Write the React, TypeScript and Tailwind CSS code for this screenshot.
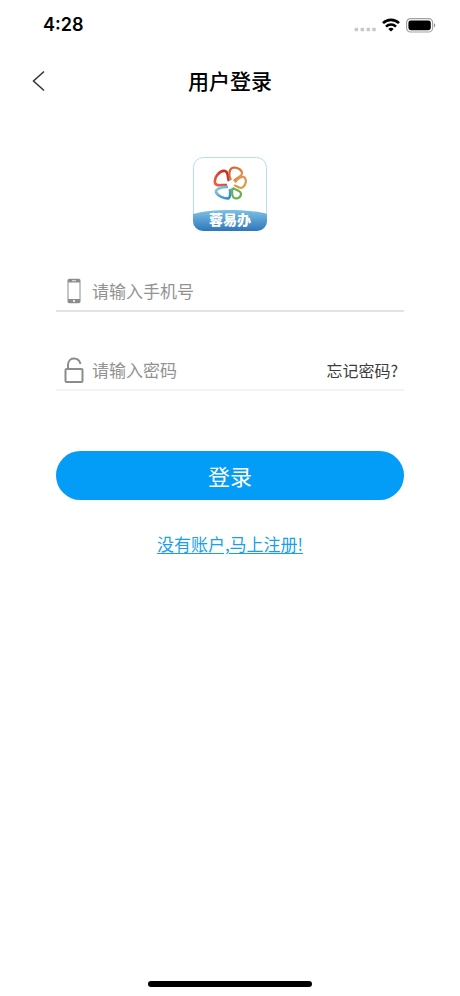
function StatusBar() {
  return (
    <div className="flex h-12 items-center justify-between pl-[43px] pr-6 pt-0.5 text-black">
      <span className="font-[Inter] text-[18px] font-semibold leading-6">4:28</span>
      <div className="flex items-center gap-1.5">
        <svg width="22" height="5" viewBox="0 0 22 5" fill="#c8c8c8" className="mt-2" aria-hidden="true">
          <rect x="0.5" y="0.7" width="3.6" height="3.6" rx="1" />
          <rect x="6.5" y="0.7" width="3.6" height="3.6" rx="1" />
          <rect x="12.5" y="0.7" width="3.6" height="3.6" rx="1" />
          <rect x="18.2" y="0.7" width="3.6" height="3.6" rx="1" />
        </svg>
        <svg width="18" height="14" viewBox="0 0 18 14" fill="none" stroke="#000" strokeWidth="2.6" aria-hidden="true">
          <path d="M1 5.2C5.5 0.7 12.5 0.7 17 5.2" />
          <path d="M4 8.6C6.8 5.8 11.2 5.8 14 8.6" />
          <path d="M9 13.6 6.3 10.9C7.9 9.5 10.1 9.5 11.7 10.9Z" fill="#000" stroke="none" />
        </svg>
        <svg width="30" height="15" viewBox="0 0 30 15" aria-hidden="true">
          <rect x="0.6" y="0.6" width="26" height="13.4" rx="4" fill="none" stroke="#a3a3a3" strokeWidth="1.2" />
          <rect x="2.4" y="2.4" width="22.4" height="9.8" rx="2.4" fill="#000" />
          <path d="M28 5.2v4.2c1.7-.6 1.7-3.6 0-4.2Z" fill="#8a8a8a" />
        </svg>
      </div>
    </div>
  );
}

function Logo() {
  return (
    <svg width="74" height="74" viewBox="0 0 74 74" role="img" aria-label="蓉易办">
      <defs>
        <linearGradient id="wave" x1="0" y1="0" x2="0" y2="1">
          <stop offset="0" stopColor="#7cc2e6" />
          <stop offset="1" stopColor="#2f76ba" />
        </linearGradient>
        <linearGradient id="red" x1="1" y1="0" x2="0" y2="1">
          <stop offset="0" stopColor="#b8281c" />
          <stop offset="1" stopColor="#ee6440" />
        </linearGradient>
        <linearGradient id="orange" x1="0" y1="0" x2="1" y2="1">
          <stop offset="0" stopColor="#d9502a" />
          <stop offset="1" stopColor="#dca653" />
        </linearGradient>
        <linearGradient id="blue" x1="0" y1="0" x2="1" y2="1">
          <stop offset="0" stopColor="#8bd0e6" />
          <stop offset="1" stopColor="#2788b8" />
        </linearGradient>
        <clipPath id="card">
          <rect width="74" height="74" rx="10" />
        </clipPath>
      </defs>
      <rect x="0.5" y="0.5" width="73" height="73" rx="10" fill="#fff" stroke="#b3def3" />
      <path d="M0 57C18 51.5 56 51.5 74 57V74H0Z" fill="url(#wave)" clipPath="url(#card)" />
      <g fill="none" strokeWidth="2.6" strokeLinejoin="round">
        <path stroke="url(#red)" d="M36 24C34 21 36 15 32 14C27 13 21 20 22 26C22.500 30 29 27.500 34 28" />
        <path stroke="url(#orange)" d="M38 23C35 18 36 11 41 10.500C45 10.500 49.500 13 49 17C48 20 43 20.500 41 24" strokeWidth="2.2" />
        <path stroke="#d99a50" d="M42 25.500C45 21 50 18.500 52 21C54 24 52 30.500 48 31C45 31 44 28.500 41 28.500" strokeWidth="2.2" />
        <path stroke="url(#blue)" d="M35 30C29 29.500 22 32 23 35.500C25 39 31 41.500 35 41.500C38 41 37 36 37 32" />
        <path stroke="#68b152" d="M39.500 31C43 33 48 33.500 48 37C48 41 43 42.500 40.500 40.500C38.500 38 39 34 39.500 31" strokeWidth="2.2" />
      </g>
      <text x="37" y="68" textAnchor="middle" fill="#fff" fontSize="14" fontWeight="900" fontFamily="'Noto Sans CJK SC', sans-serif">
        蓉易办
      </text>
    </svg>
  );
}

function PhoneIcon() {
  return (
    <svg width="14" height="26" viewBox="0 0 14 26" aria-hidden="true">
      <rect x="0.5" y="0.8" width="13" height="24.4" rx="1.8" fill="#8c8c8c" />
      <rect x="1.5" y="4.5" width="11" height="16.5" fill="#fff" />
      <path d="M5 2.7h4" stroke="#fff" strokeWidth="0.8" />
      <circle cx="7" cy="23" r="1.1" fill="#fff" />
    </svg>
  );
}

function LockIcon() {
  return (
    <svg width="20" height="26" viewBox="0 0 20 26" fill="none" stroke="#8c8c8c" strokeWidth="2" aria-hidden="true">
      <rect x="1.5" y="12" width="17" height="13" rx="1" />
      <path d="M4 12V8C4 -0.2 14.5 -0.5 16.5 7" />
    </svg>
  );
}

export default function App() {
  return (
    <div className="flex min-h-screen flex-col bg-white font-['Noto_Sans_CJK_SC',sans-serif]">
      <StatusBar />

      <header className="grid h-[66px] grid-cols-[1fr_auto_1fr] items-center px-8">
        <button type="button" aria-label="返回" className="justify-self-start">
          <svg width="13" height="22" viewBox="0 0 13 22" fill="none" stroke="#333" strokeWidth="1.5">
            <path d="M12 1.5 1.5 11 12 20.5" />
          </svg>
        </button>
        <h1 className="pb-0.5 text-[21px] font-medium leading-8 text-black">用户登录</h1>
      </header>

      <main className="flex flex-1 flex-col px-14 pt-[43px]">
        <div className="flex justify-center">
          <Logo />
        </div>

        <form className="mt-10 flex flex-col">
          <label className="flex h-[41px] items-center border-b-2 border-[#e2e2e2]">
            <span className="flex w-9 justify-center">
              <PhoneIcon />
            </span>
            <input
              type="tel"
              aria-label="手机号"
              placeholder="请输入手机号"
              className="min-w-0 flex-1 text-[17px] leading-6 text-[#333] outline-none placeholder:text-[#929292]"
            />
          </label>

          <div className="mt-[38px] flex h-[41px] items-center border-b-2 border-[#f3f3f3]">
            <label htmlFor="password" className="flex w-9 justify-center">
              <LockIcon />
            </label>
            <input
              id="password"
              type="password"
              aria-label="密码"
              placeholder="请输入密码"
              className="min-w-0 flex-1 text-[17px] leading-6 text-[#333] outline-none placeholder:text-[#929292]"
            />
            <a href="#forgot" className="pr-1.5 text-[16px] leading-6 text-[#3c3c3c]">
              忘记密码?
            </a>
          </div>

          <button type="submit" className="mt-[60px] h-[49px] rounded-full bg-[#039cf6] pb-0.5 text-[22px] leading-8 text-white">
            登录
          </button>
        </form>

        <a href="#register" className="mt-8 self-center text-[17px] leading-6 text-[#1a9fec] underline underline-offset-2">
          没有账户,马上注册!
        </a>
      </main>

      <div className="mx-auto mb-[9px] h-1.5 w-[164px] rounded-full bg-black" />
    </div>
  );
}
